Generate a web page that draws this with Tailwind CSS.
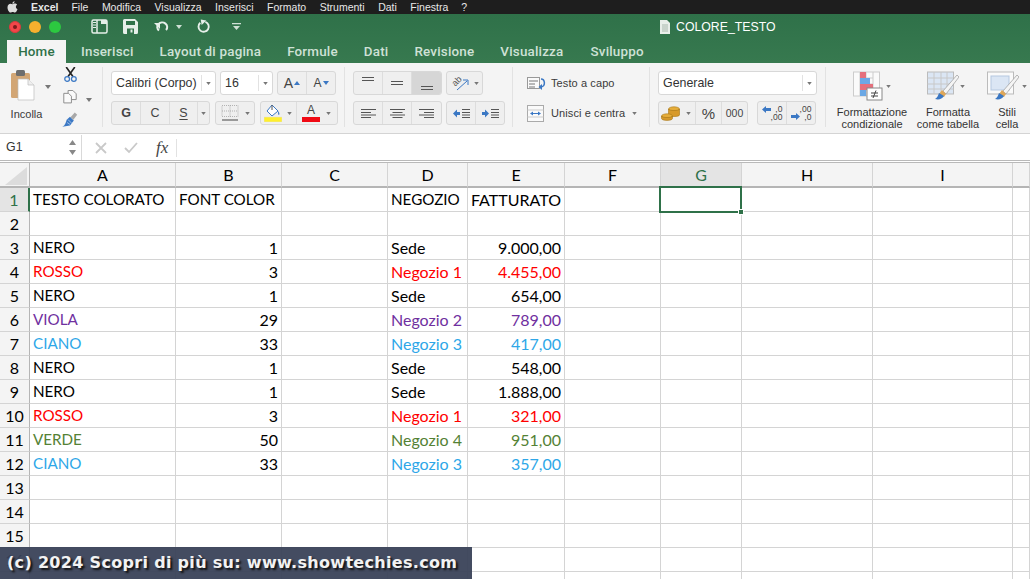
<!DOCTYPE html>
<html lang="it">
<head>
<meta charset="UTF-8" />
<title>COLORE_TESTO</title>
<script src="https://cdn.jsdelivr.net/npm/@tailwindcss/browser@4"></script>
</head>
<body class="w-[1030px] h-[579px] overflow-hidden bg-white font-['Liberation_Sans',sans-serif] relative">

<!-- barra menu mac -->
<div class="h-[14px] bg-[#1e1e1e] flex items-center text-[#e8e8e8] text-[10.500px] leading-none">
  <svg class="ml-[7px] w-[11px] h-[12px]" viewBox="0 0 11 12"><path fill="#ddd" d="M7.6 0.3c.1 1-.8 2.4-2.2 2.4C5.300 1.500 6.400.4 7.600.3zM5.500 3.200c.6 0 1.300-.6 2.300-.6 1 0 1.800.5 2.300 1.200-1.900 1.100-1.500 3.700.4 4.400-.5 1.400-1.500 3.300-2.700 3.300-.8 0-1.100-.5-2.100-.5s-1.300.5-2.100.5C2.200 11.500.5 8.700.5 6.400.5 4 2 2.700 3.400 2.700c.9 0 1.600.5 2.100.5z"/></svg>
  <span class="ml-[13px] font-bold">Excel</span>
  <span class="ml-[13px]">File</span>
  <span class="ml-[13.500px]">Modifica</span>
  <span class="ml-[13.500px]">Visualizza</span>
  <span class="ml-[13.500px]">Inserisci</span>
  <span class="ml-[13.500px]">Formato</span>
  <span class="ml-[13.500px]">Strumenti</span>
  <span class="ml-[13.500px]">Dati</span>
  <span class="ml-[13.500px]">Finestra</span>
  <span class="ml-[13px]">?</span>
</div>

<!-- barra titolo + schede -->
<div class="h-[49px] bg-gradient-to-b from-[#2f7149] to-[#37794f] text-white">
  <div class="h-[25px] flex items-center relative">
    <span class="ml-[9px] w-[12px] h-[12px] rounded-full bg-[#f2474a] border border-[#d93a3c] flex items-center justify-center"><span class="w-[4px] h-[4px] rounded-full bg-[#7d1a1c]"></span></span>
    <span class="ml-[8px] w-[12px] h-[12px] rounded-full bg-[#f6b02e]"></span>
    <span class="ml-[8px] w-[12px] h-[12px] rounded-full bg-[#2cc840]"></span>
    <svg class="ml-[30px] w-[17px] h-[15px]" viewBox="0 0 17 15" fill="none" stroke="#e6efe9" stroke-width="1.500"><rect x="1" y="1" width="15" height="13" rx="1.500"/><path d="M6 1v13"/><path fill="#e6efe9" stroke="none" d="M2 3h3v1H2zM2 5.500h3v1H2zM2 8h3v1H2z"/><path fill="#e6efe9" stroke="none" d="M10 1h6v4h-6z"/></svg>
    <svg class="ml-[15px] w-[15px] h-[15px]" viewBox="0 0 15 15"><path fill="#e6efe9" fill-rule="evenodd" d="M1.500 0h10.500L15 3v10.500a1.500 1.500 0 0 1-1.500 1.500h-12A1.500 1.500 0 0 1 0 13.500v-12A1.500 1.500 0 0 1 1.500 0zM3 2v4h9V2zM4 9.500V15h7V9.500zM7.500 10.500h2v3h-2z"/></svg>
    <svg class="ml-[16px] w-[16px] h-[13px]" viewBox="0 0 16 13" fill="none" stroke="#e6efe9" stroke-width="2"><path d="M5 10.500 A5 4.500 0 1 1 12 10"/><path fill="#e6efe9" stroke="none" d="M0 3h6v6z"/></svg>
    <svg class="ml-[6px] w-[6px] h-[4px]" viewBox="0 0 6 4"><path fill="#cfe0d5" d="M0 0h6L3 4z"/></svg>
    <svg class="ml-[15px] w-[14px] h-[15px]" viewBox="0 0 15 15" fill="none" stroke="#e6efe9" stroke-width="2"><path d="M3.500 3.500 A5.500 5.500 0 1 0 9 2.500"/><path fill="#e6efe9" stroke="none" d="M4 0 10 1 5 6z"/></svg>
    <svg class="ml-[21px] w-[9px] h-[7px]" viewBox="0 0 9 7"><path fill="#cfe0d5" d="M0 0h9v1.200H0zM1 3h7L4.500 7z"/></svg>
    <div class="absolute left-[660px] top-[6px] flex items-center gap-[6px] text-[12.300px] leading-none">
      <svg class="w-[10px] h-[14px]" viewBox="0 0 10 14"><path fill="#e8eee9" d="M0 0h7l3 3v11H0z"/><path stroke="#a9b8ad" d="M2 5h6M2 7h6M2 9h6M2 11h6"/></svg>
      <span>COLORE_TESTO</span>
    </div>
  </div>
  <div class="h-[24px] flex items-end font-['Roboto',sans-serif] font-medium text-[13.400px] text-[#cfe1d6] tracking-[.2px]">
    <div class="ml-[7px] w-[59px] h-[23px] pt-[1px] bg-[#f4f4f4] text-[#2f7149] flex items-center justify-center">Home</div>
    <div class="ml-[15px] h-[23px] pt-[1px] flex items-center">Inserisci</div>
    <div class="ml-[26px] h-[23px] pt-[1px] flex items-center">Layout di pagina</div>
    <div class="ml-[26px] h-[23px] pt-[1px] flex items-center">Formule</div>
    <div class="ml-[26px] h-[23px] pt-[1px] flex items-center">Dati</div>
    <div class="ml-[26px] h-[23px] pt-[1px] flex items-center">Revisione</div>
    <div class="ml-[26px] h-[23px] pt-[1px] flex items-center">Visualizza</div>
    <div class="ml-[27px] h-[23px] pt-[1px] flex items-center">Sviluppo</div>
  </div>
</div>

<!-- ribbon -->
<div class="h-[71px] bg-[#f4f4f4] border-b border-[#d4d4d4] flex text-[#333] text-[11px] leading-none">

  <!-- appunti -->
  <div class="w-[103px] h-[60px] mt-[4px] pt-[4px] border-r border-[#e2e2e2] flex">
    <div class="ml-[10px] w-[33px] flex flex-col items-center">
      <svg class="w-[26px] h-[31px] self-start mt-[-1px]" viewBox="0 0 26 31"><rect x="1" y="3" width="19" height="25" rx="1.500" fill="#d2a675"/><rect x="6" y="0" width="9" height="6" rx="1.500" fill="#6d6d6d"/><path d="M8 9h10l6 6v15H8z" fill="#fff" stroke="#bbb" stroke-width=".7"/><path d="M18 9v6h6" fill="#eee" stroke="#bbb" stroke-width=".7"/></svg>
      <span class="mt-[8px] text-[#3a3a3a]">Incolla</span>
    </div>
    <svg class="ml-[2px] mt-[14px] w-[6px] h-[4px]" viewBox="0 0 6 4"><path fill="#777" d="M0 0h6L3 4z"/></svg>
    <div class="ml-[11px] flex flex-col items-center">
      <svg class="w-[15px] h-[16px] mt-[-4px]" viewBox="0 0 15 16" fill="none"><path d="M3 0l7 10M12 0 5 10" stroke="#222" stroke-width="1.700"/><circle cx="4" cy="12.500" r="2.500" stroke="#3b78c4" stroke-width="1.300"/><circle cx="11" cy="12.500" r="2.500" stroke="#3b78c4" stroke-width="1.300"/></svg>
      <svg class="w-[14px] h-[14px] mt-[8px]" viewBox="0 0 14 14" fill="#fafafa" stroke="#8a8a8a"><path d="M5 .5h5l3.500 3.500v6H5z"/><path d="M.5 3.500h5l3 3v7h-8z"/></svg>
      <svg class="w-[16px] h-[16px] mt-[8px]" viewBox="0 0 16 16"><path d="M8 5 12 9 8 14 0 15.500C3 14 4 10 4.500 8z" fill="#3b78c4"/><path d="M6 8l4 4M5 11l3 2" stroke="#cfe0f5" stroke-width=".7"/><path d="M8.500 5.500 13 .5 15.500 3 11.500 8z" fill="#a8a8a8"/></svg>
    </div>
    <svg class="ml-[8px] mt-[27px] w-[6px] h-[4px]" viewBox="0 0 6 4"><path fill="#777" d="M0 0h6L3 4z"/></svg>
  </div>

  <!-- carattere -->
  <div class="w-[242px] h-[60px] mt-[4px] pt-[4px] border-r border-[#e2e2e2] pl-[8px] flex flex-col gap-[6px]">
    <div class="flex h-[24px]">
      <div class="w-[105px] bg-white border border-[#d8d8d8] rounded-[3px] flex items-center pl-[4px] text-[12.400px]">Calibri (Corpo)<span class="ml-auto w-[14px] h-[16px] border-l border-[#e2e2e2] flex items-center justify-center"><svg class="w-[5px] h-[3px]" viewBox="0 0 6 4"><path fill="#777" d="M0 0h6L3 4z"/></svg></span></div>
      <div class="ml-[4px] w-[53px] bg-white border border-[#d8d8d8] rounded-[3px] flex items-center pl-[4px] text-[12.400px]">16<span class="ml-auto w-[14px] h-[16px] border-l border-[#e2e2e2] flex items-center justify-center"><svg class="w-[5px] h-[3px]" viewBox="0 0 6 4"><path fill="#777" d="M0 0h6L3 4z"/></svg></span></div>
      <div class="ml-[4px] w-[59px] bg-[#efefef] border border-[#d8d8d8] rounded-[3px] flex">
        <div class="w-[29px] border-r border-[#ddd] flex items-center justify-center gap-[1px] text-[14px] text-[#444]">A<svg class="w-[6px] h-[4px]" viewBox="0 0 6 4"><path fill="#3b78c4" d="M3 0l3 4H0z"/></svg></div>
        <div class="flex-1 flex items-center justify-center gap-[1px] text-[12px] text-[#444]">A<svg class="w-[6px] h-[4px]" viewBox="0 0 6 4"><path fill="#3b78c4" d="M0 0h6L3 4z"/></svg></div>
      </div>
    </div>
    <div class="flex h-[24px]">
      <div class="w-[99px] bg-[#efefef] border border-[#d8d8d8] rounded-[3px] flex text-[12.500px] text-[#444]">
        <div class="w-[29px] border-r border-[#ddd] flex items-center justify-center font-bold">G</div>
        <div class="w-[29px] border-r border-[#ddd] flex items-center justify-center">C</div>
        <div class="w-[28px] border-r border-[#ddd] flex items-center justify-center underline underline-offset-2">S</div>
        <div class="flex-1 flex items-center justify-center"><svg class="w-[5px] h-[3px]" viewBox="0 0 6 4"><path fill="#777" d="M0 0h6L3 4z"/></svg></div>
      </div>
      <div class="ml-[5px] w-[40px] bg-[#efefef] border border-[#d8d8d8] rounded-[3px] flex items-center">
        <svg class="ml-[5px] w-[18px] h-[16px]" viewBox="0 0 18 16" fill="none"><path d="M1 .5h16v11H1zM1 6h16M9 .5v11" stroke="#999" stroke-width=".7" stroke-dasharray="1 1"/><path d="M1 15h16" stroke="#444"/></svg>
        <svg class="ml-[6px] w-[5px] h-[3px]" viewBox="0 0 6 4"><path fill="#777" d="M0 0h6L3 4z"/></svg>
      </div>
      <div class="ml-[5px] w-[78px] bg-[#efefef] border border-[#d8d8d8] rounded-[3px] flex items-center">
        <svg class="ml-[3px] w-[18px] h-[18px]" viewBox="0 0 18 18"><path d="M8 1 14 7 8 12 3 7z" fill="#fff" stroke="#3b78c4"/><path d="M8 1v5" stroke="#555"/><path d="M14 7c1 1 2 3 1 4-1 0-1-2-1-4z" fill="#3b78c4"/><rect y="13" width="18" height="5" fill="#ffef2e" stroke="#ddd" stroke-width=".5"/></svg>
        <svg class="ml-[5px] w-[5px] h-[3px]" viewBox="0 0 6 4"><path fill="#777" d="M0 0h6L3 4z"/></svg>
        <span class="ml-[4px] w-px h-full bg-[#ddd]"></span>
        <span class="ml-[5px] w-[18px] flex flex-col items-center text-[12px] text-[#444]">A<span class="w-[18px] h-[5px] bg-[#f00a14] mt-[1px]"></span></span>
        <svg class="ml-[6px] w-[5px] h-[3px]" viewBox="0 0 6 4"><path fill="#777" d="M0 0h6L3 4z"/></svg>
      </div>
    </div>
  </div>

  <!-- allineamento -->
  <div class="w-[168px] h-[60px] mt-[4px] pt-[4px] border-r border-[#e2e2e2] pl-[8px] flex flex-col gap-[6px]">
    <div class="flex h-[24px]">
      <div class="w-[89px] bg-[#efefef] border border-[#d8d8d8] rounded-[3px] flex overflow-hidden">
        <div class="w-[29px] border-r border-[#ddd] flex justify-center pt-[5px]"><svg class="w-[12px] h-[4px]" viewBox="0 0 12 4" stroke="#555"><path d="M0 .5h12M0 3.500h12"/></svg></div>
        <div class="w-[29px] border-r border-[#ddd] flex justify-center items-center"><svg class="w-[12px] h-[4px]" viewBox="0 0 12 4" stroke="#555"><path d="M0 .5h12M0 3.500h12"/></svg></div>
        <div class="flex-1 bg-[#d6d6d6] flex justify-center items-end pb-[4px]"><svg class="w-[12px] h-[4px]" viewBox="0 0 12 4" stroke="#555"><path d="M0 .5h12M0 3.500h12"/></svg></div>
      </div>
      <div class="ml-[4px] w-[37px] bg-[#efefef] border border-[#d8d8d8] rounded-[3px] flex items-center">
        <span class="ml-[6px] w-[16px] h-[16px] relative block"><span class="absolute left-[-1px] top-[2px] -rotate-45 text-[9px] text-[#555]">ab</span><svg class="absolute left-[3px] top-[3px] w-[13px] h-[13px]" viewBox="0 0 13 13" fill="none" stroke="#3b78c4"><path d="M1 12 11 3M7 2h5v5"/></svg></span>
        <svg class="ml-[5px] w-[5px] h-[3px]" viewBox="0 0 6 4"><path fill="#777" d="M0 0h6L3 4z"/></svg>
      </div>
    </div>
    <div class="flex h-[24px]">
      <div class="w-[89px] bg-[#efefef] border border-[#d8d8d8] rounded-[3px] flex">
        <div class="w-[29px] border-r border-[#ddd] flex justify-center items-center"><svg class="w-[15px] h-[9px]" viewBox="0 0 15 9" stroke="#555"><path d="M0 .5h15M0 3.500h10M0 6h15M0 8.500h10"/></svg></div>
        <div class="w-[29px] border-r border-[#ddd] flex justify-center items-center"><svg class="w-[15px] h-[9px]" viewBox="0 0 15 9" stroke="#555"><path d="M0 .5h15M2.500 3.500h10M0 6h15M2.500 8.500h10"/></svg></div>
        <div class="flex-1 flex justify-center items-center"><svg class="w-[15px] h-[9px]" viewBox="0 0 15 9" stroke="#555"><path d="M0 .5h15M5 3.500h10M0 6h15M5 8.500h10"/></svg></div>
      </div>
      <div class="ml-[4px] w-[59px] bg-[#efefef] border border-[#d8d8d8] rounded-[3px] flex">
        <div class="w-[29px] border-r border-[#ddd] flex justify-center items-center"><svg class="w-[17px] h-[9px]" viewBox="0 0 17 9"><path d="M0 4.500 4 .5v2.500h3v3H4v2.500z" fill="#3b78c4"/><path d="M9 .5h8M9 3.500h8M9 6h8M9 8.500h8" stroke="#555"/></svg></div>
        <div class="flex-1 flex justify-center items-center"><svg class="w-[17px] h-[9px]" viewBox="0 0 17 9"><path d="M7 4.500 3 .5v2.500H0v3h3v2.500z" fill="#3b78c4"/><path d="M9 .5h8M9 3.500h8M9 6h8M9 8.500h8" stroke="#555"/></svg></div>
      </div>
    </div>
  </div>

  <!-- testo a capo -->
  <div class="w-[137px] h-[60px] mt-[4px] pt-[4px] border-r border-[#e2e2e2] pl-[14px] flex flex-col text-[#3a3a3a]">
    <div class="flex h-[24px] items-center">
      <svg class="w-[19px] h-[14px]" viewBox="0 0 19 14" fill="none"><rect x=".5" y="1.500" width="12" height="11" fill="#fafafa" stroke="#999"/><path d="M2 5h9M2 8h6M2 11h6" stroke="#777"/><path d="M14 3c4 0 5 7 0 8" stroke="#3b78c4" stroke-width="1.500"/><path d="M11.500 11 15 8v6z" fill="#3b78c4"/></svg>
      <span class="ml-[5px] tracking-[.1px]">Testo a capo</span>
    </div>
    <div class="flex h-[24px] items-center mt-[6px]">
      <svg class="w-[17px] h-[17px]" viewBox="0 0 17 17" fill="none"><rect x=".5" y=".5" width="16" height="16" fill="#fafafa" stroke="#aaa"/><path d="M.5 5h16M.5 12h16" stroke="#ccc"/><path d="M4 8.500h9" stroke="#3b78c4"/><path d="M3 8.500 6 6.500v4zM14 8.500 11 6.500v4z" fill="#3b78c4"/></svg>
      <span class="ml-[7px] tracking-[.1px]">Unisci e centra</span>
      <svg class="ml-[7px] w-[5px] h-[3px]" viewBox="0 0 6 4"><path fill="#777" d="M0 0h6L3 4z"/></svg>
    </div>
  </div>

  <!-- numeri -->
  <div class="w-[176px] h-[60px] mt-[4px] pt-[4px] border-r border-[#e2e2e2] pl-[8px] flex flex-col gap-[6px]">
    <div class="w-[159px] h-[24px] bg-white border border-[#d8d8d8] rounded-[3px] flex items-center pl-[4px] text-[12.400px]">Generale<span class="ml-auto w-[14px] h-[16px] border-l border-[#e2e2e2] flex items-center justify-center"><svg class="w-[5px] h-[3px]" viewBox="0 0 6 4"><path fill="#777" d="M0 0h6L3 4z"/></svg></span></div>
    <div class="flex h-[24px]">
      <div class="w-[90px] bg-[#efefef] border border-[#d8d8d8] rounded-[3px] flex">
        <div class="w-[37px] border-r border-[#ddd] flex items-center pl-[2px] gap-[6px]">
          <svg class="w-[19px] h-[15px] shrink-0" viewBox="0 0 19 15"><ellipse cx="13" cy="3" rx="5.500" ry="2.200" fill="#e6ad3a" stroke="#a87717" stroke-width=".6"/><path d="M7.500 3v6c0 2 11 2 11 0V3c0 2-11 2-11 0z" fill="#d79a2b" stroke="#a87717" stroke-width=".6"/><ellipse cx="6" cy="10" rx="5.500" ry="2.200" fill="#e6ad3a" stroke="#a87717" stroke-width=".6"/><path d="M.5 10v2.500c0 2.500 11 2.500 11 0V10c0 2-11 2-11 0z" fill="#d79a2b" stroke="#a87717" stroke-width=".6"/></svg>
          <svg class="w-[5px] h-[3px] shrink-0" viewBox="0 0 6 4"><path fill="#777" d="M0 0h6L3 4z"/></svg>
        </div>
        <div class="w-[26px] border-r border-[#ddd] flex items-center justify-center text-[15px] text-[#444]">%</div>
        <div class="flex-1 flex items-center justify-center text-[10.500px] text-[#444]">000</div>
      </div>
      <div class="ml-[9px] w-[59px] bg-[#efefef] border border-[#d8d8d8] rounded-[3px] flex text-[8.500px] leading-[8px] text-[#444]">
        <div class="w-[29px] border-r border-[#ddd] flex items-center justify-center"><svg class="w-[9px] h-[7px] self-start mt-[4px]" viewBox="0 0 9 7"><path d="M0 3.500 4 0v2h5v3H4v2z" fill="#3b78c4"/></svg><span class="text-right">,0<br>,00</span></div>
        <div class="flex-1 flex items-center justify-center"><svg class="w-[9px] h-[7px] self-end mb-[4px]" viewBox="0 0 9 7"><path d="M9 3.500 5 0v2H0v3h5v2z" fill="#3b78c4"/></svg><span class="text-right">,00<br>,0</span></div>
      </div>
    </div>
  </div>

  <!-- stili -->
  <div class="flex-1 h-[60px] mt-[4px] pt-[4px] flex text-center leading-[12px] text-[#333]">
    <div class="ml-[9px] w-[74px] flex flex-col items-center">
      <div class="flex items-center">
        <svg class="w-[30px] h-[30px]" viewBox="0 0 30 30"><rect x=".5" y="1" width="26" height="24" fill="#fafafa" stroke="#ccc"/><path d="M7 7h13M7 13h13M7 19h13" stroke="#ccc"/><path d="M7 1v24M13 1v24M20 1v24" stroke="#ccc"/><rect x="7" y="1" width="6" height="6" fill="#e5707c"/><rect x="7" y="7" width="10" height="6" fill="#6ba8e5"/><rect x="7" y="13" width="13" height="6" fill="#e5707c"/><rect x="7" y="19" width="6" height="6" fill="#6ba8e5"/><rect x="14" y="17" width="15" height="12" fill="#fff" stroke="#888"/><path d="M18 22h7M18 25h7M23 19.500 20 27" stroke="#444"/></svg>
        <svg class="ml-[3px] w-[5px] h-[3px]" viewBox="0 0 6 4"><path fill="#777" d="M0 0h6L3 4z"/></svg>
      </div>
      <span class="mt-[5px]">Formattazione condizionale</span>
    </div>
    <div class="ml-[6px] w-[66px] flex flex-col items-center">
      <div class="flex items-center ml-[-4px]">
        <svg class="w-[32px] h-[30px]" viewBox="0 0 32 30"><rect x=".5" y="1" width="26" height="22" fill="#dbe6f4" stroke="#bbb"/><path d="M.5 7h26M.5 13h26M.5 18h26M7 1v22M14 1v22M20 1v22" stroke="#c8c8c8"/><path d="M30 4 16 20l3 3L32 6z" fill="#f4f4f4" stroke="#999" stroke-width=".7"/><path d="M15 19l4 4-2 3-5-3z" fill="#dfa758"/><path d="M12 22l5 3c-2 3-5 4-9 3 2-1 3-3 4-6z" fill="#3b78c4"/></svg>
        <svg class="ml-[1px] w-[5px] h-[3px]" viewBox="0 0 6 4"><path fill="#777" d="M0 0h6L3 4z"/></svg>
      </div>
      <span class="mt-[5px]">Formatta come tabella</span>
    </div>
    <div class="ml-[8px] w-[36px] flex flex-col items-center">
      <div class="flex items-center self-start ml-[-2px]">
        <svg class="w-[32px] h-[30px] shrink-0" viewBox="0 0 32 30"><rect x=".5" y="1" width="26" height="22" fill="#fafafa" stroke="#bbb"/><rect x="4" y="5" width="18" height="14" fill="#dbe6f4" stroke="#b5c8e0"/><path d="M30 4 16 20l3 3L32 6z" fill="#f4f4f4" stroke="#999" stroke-width=".7"/><path d="M15 19l4 4-2 3-5-3z" fill="#dfa758"/><path d="M12 22l5 3c-2 3-5 4-9 3 2-1 3-3 4-6z" fill="#3b78c4"/></svg>
        <svg class="ml-[3px] w-[5px] h-[3px] shrink-0" viewBox="0 0 6 4"><path fill="#777" d="M0 0h6L3 4z"/></svg>
      </div>
      <span class="mt-[5px]">Stili cella</span>
    </div>
  </div>
</div>

<!-- barra formula -->
<div class="h-[29px] pt-[1px] bg-white border-b-[3px] border-double border-[#b9b9b9] flex items-center text-[#333]">
  <div class="w-[82px] h-full border-r border-[#d9d9d9] flex items-center pl-[6px] text-[12.400px] relative">G1
    <svg class="absolute left-[68px] top-[5px] w-[9px] h-[16px]" viewBox="0 0 9 16"><path fill="#888" d="M4.500 0 8 5H1zM1 10h7l-3.500 5z"/></svg>
  </div>
  <svg class="ml-[13px] w-[12px] h-[12px]" viewBox="0 0 12 12" stroke="#c9c9c9" stroke-width="1.800"><path d="M1 1l10 10M11 1 1 11"/></svg>
  <svg class="ml-[17px] w-[14px] h-[12px]" viewBox="0 0 14 12" fill="none" stroke="#c9c9c9" stroke-width="1.800"><path d="M1 6l4 4 8-9"/></svg>
  <span class="ml-[18px] w-[21px] h-[18px] border-r border-[#e2e2e2] font-['Liberation_Serif',serif] italic text-[17px] text-[#444] leading-[18px]">fx</span>
</div>

<!-- foglio -->
<div id="foglio" class="grid grid-cols-[30px_146px_106px_106px_80px_97px_96px_81px_131px_140px_17px] grid-rows-[25px] auto-rows-[24px] font-['Lato',sans-serif] text-[16px] text-black leading-none">
  <div class="bg-[#f4f4f4] border-r border-b-2 border-[#b5b5b5]"><svg class="w-[22px] h-[18px] mt-[4px] ml-[5px]" viewBox="0 0 22 18"><path fill="#dcdcdc" d="M22 0v18H0z"/></svg></div>
</div>

<!-- selezione G1 -->
<div class="absolute left-[659px] top-[186px] w-[83px] h-[27px] border-2 border-[#2f7149]">
  <span class="absolute right-[-4px] bottom-[-4px] w-[6px] h-[6px] bg-[#2f7149] border border-white"></span>
</div>

<!-- banner -->
<div class="absolute left-0 bottom-0 w-[472px] h-[32px] bg-[#3a4258]/95 pl-[7px] flex items-center font-['DejaVu_Sans',sans-serif] font-bold text-[16px] text-[#f2f2f2] [text-shadow:2px_2px_2px_#111] tracking-[.31px] whitespace-nowrap">(c) 2024 Scopri di più su: www.showtechies.com</div>

<script>
  // colori testo delle celle
  const colori = { n: "text-black", r: "text-[#ff0000]", v: "text-[#7030a0]", c: "text-[#2ea7e8]", g: "text-[#548235]" };
  const righe = [
    ["n", "TESTO COLORATO", "FONT COLOR", "NEGOZIO", "FATTURATO"],
    null,
    ["n", "NERO", "1", "Sede", "9.000,00"],
    ["r", "ROSSO", "3", "Negozio 1", "4.455,00"],
    ["n", "NERO", "1", "Sede", "654,00"],
    ["v", "VIOLA", "29", "Negozio 2", "789,00"],
    ["c", "CIANO", "33", "Negozio 3", "417,00"],
    ["n", "NERO", "1", "Sede", "548,00"],
    ["n", "NERO", "1", "Sede", "1.888,00"],
    ["r", "ROSSO", "3", "Negozio 1", "321,00"],
    ["g", "VERDE", "50", "Negozio 4", "951,00"],
    ["c", "CIANO", "33", "Negozio 3", "357,00"]
  ];
  const foglio = document.getElementById("foglio");
  const base = "border-r border-b border-[#d4d4d4] flex items-center px-[3px] whitespace-nowrap overflow-hidden ";
  const maiuscole = "text-[15.200px] pt-[1px] ";

  function cella(testo, classi) {
    const d = document.createElement("div");
    d.className = classi;
    d.textContent = testo;
    foglio.appendChild(d);
  }

  // intestazione colonne
  ["A", "B", "C", "D", "E", "F", "G", "H", "I", ""].forEach((l) => {
    cella(l, l === "G"
      ? "bg-[#e4e4e4] text-[#2f7149] border-b-2 border-b-[#b5b5b5] border-r border-r-[#d4d4d4] flex items-center justify-center"
      : "bg-[#f4f4f4] border-b-2 border-b-[#b5b5b5] border-r border-r-[#d4d4d4] flex items-center justify-center");
  });

  for (let i = 0; i < 17; i++) {
    const r = righe[i];
    const col = r ? colori[r[0]] : "";
    cella(String(i + 1), i === 0
      ? "bg-[#e4e4e4] text-[#2f7149] border-r-2 border-r-[#2f7149] border-b border-b-[#d4d4d4] flex items-center justify-center"
      : "bg-[#f4f4f4] border-r border-r-[#b5b5b5] border-b border-b-[#d4d4d4] flex items-center justify-center");
    cella(r ? r[1] : "", base + maiuscole + col);
    cella(r ? r[2] : "", base + "text-black" + (i > 0 ? " justify-end" : " " + maiuscole));
    cella("", base);
    cella(r ? r[3] : "", base + col + (i === 0 ? " " + maiuscole : ""));
    cella(r ? r[4] : "", base + col + (i > 0 ? " justify-end" : ""));
    for (let k = 0; k < 5; k++) cella("", base);
  }
</script>
</body>
</html>
